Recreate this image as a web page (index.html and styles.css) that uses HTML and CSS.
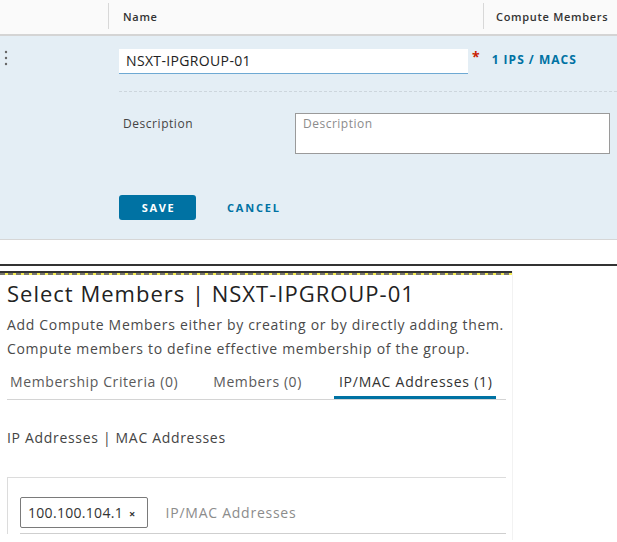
FILE: index.html
```html
<!DOCTYPE html>
<html>
<head>
<meta charset="utf-8">
<link rel="stylesheet" href="styles.css">
</head>
<body>
<div class="grid-head">
  <div class="col col-gutter"></div>
  <div class="col col-name"><span>Name</span></div>
  <div class="col col-members"><span>Compute Members</span></div>
</div>
<div class="edit-row">
  <div class="gutter">
    <svg width="6" height="16" viewBox="0 0 6 16"><circle cx="3" cy="2" r="1.2" fill="#666"/><circle cx="3" cy="8" r="1.2" fill="#666"/><circle cx="3" cy="14" r="1.2" fill="#666"/></svg>
  </div>
  <div class="form">
    <div class="name-line">
      <div class="text-input">NSXT-IPGROUP-01</div>
      <span class="required">*</span>
      <a class="link">1 IPS / MACS</a>
    </div>
    <div class="dashed"></div>
    <div class="desc-line">
      <div class="label">Description</div>
      <div class="textarea">Description</div>
    </div>
    <div class="actions">
      <button class="btn-save">SAVE</button>
      <button class="btn-cancel">CANCEL</button>
    </div>
  </div>
</div>
<div class="spacer"></div>
<div class="rule-full"></div>
<div class="panel">
  <div class="panel-rule"></div>
  <h1 class="title">Select Members | NSXT-IPGROUP-01</h1>
  <p class="desc">Add Compute Members either by creating or by directly adding them.<br>Compute members to define effective membership of the group.</p>
  <div class="tabs">
    <div class="tab">Membership Criteria (0)</div>
    <div class="tab">Members (0)</div>
    <div class="tab active">IP/MAC Addresses (1)</div>
  </div>
  <div class="subhead">IP Addresses | MAC Addresses</div>
  <div class="addr-box">
    <div class="tag-input">
      <span class="chip">100.100.104.1<span class="x">×</span></span>
      <span class="placeholder">IP/MAC Addresses</span>
    </div>
  </div>
</div>
</body>
</html>
```
FILE: styles.css
```css
* { box-sizing: border-box; }
body {
  margin: 0;
  width: 617px;
  height: 542px;
  overflow: hidden;
  background: #fff;
  font-family: "Open Sans", "Noto Sans", sans-serif;
  color: #333;
}
.grid-head {
  display: flex;
  height: 36px;
  padding-top: 3px;
  background: #fafafa;
  border-bottom: 2px solid #d4d4d4;
}
.col { height: 26px; display: flex; align-items: center; }
.col-gutter { width: 108px; }
.col-name { width: 375px; border-left: 1px solid #d8d8d8; padding-left: 14px; }
.col-members { flex: 1; border-left: 1px solid #d8d8d8; padding-left: 12px; }
.col span { font-size: 11px; font-weight: 600; color: #333; letter-spacing: 0.7px; }

.edit-row {
  display: flex;
  height: 204px;
  background: #e4eef5;
  border-bottom: 1px solid #d6d6d6;
}
.gutter { width: 119px; padding: 13px 0 0 3px; }
.form { flex: 1; padding-top: 13px; }
.name-line { display: flex; align-items: flex-start; height: 25px; }
.text-input {
  width: 349px;
  height: 25px;
  background: #fff;
  border-bottom: 1px solid #6ea9d3;
  padding-left: 7px;
  font-size: 14px;
  line-height: 24px;
  color: #222;
  letter-spacing: 0.35px;
}
.required { color: #c92100; font-size: 14px; margin-left: 4px; line-height: 16px; font-weight: 700; }
.link {
  margin-left: 12px;
  font-size: 12px;
  font-weight: 700;
  color: #0072a3;
  line-height: 22px;
  letter-spacing: 1px;
}
.dashed { margin-top: 17px; border-top: 1px dashed #cdd6dd; }
.desc-line { display: flex; margin-top: 21px; }
.label { width: 176px; padding: 3px 0 0 4px; font-size: 12px; color: #444; line-height: 16px; letter-spacing: 0.55px; }
.textarea {
  width: 315px;
  height: 41px;
  background: #fff;
  border: 1px solid #9a9a9a;
  padding: 2px 7px;
  font-size: 12px;
  color: #8c8c8c;
  line-height: 16px;
  letter-spacing: 0.5px;
}
.actions { display: flex; align-items: center; margin-top: 41px; }
.btn-save {
  width: 77px;
  height: 25px;
  border: 0;
  border-radius: 3px;
  background: #0072a3;
  color: #fff;
  font-family: inherit;
  font-size: 11px;
  font-weight: 700;
  letter-spacing: 1.6px;
  padding: 0 0 0 2px;
}
.btn-cancel {
  margin-left: 31px;
  border: 0;
  background: none;
  padding: 0;
  color: #0072a3;
  font-family: inherit;
  font-size: 11px;
  font-weight: 700;
  letter-spacing: 1.8px;
}
.spacer { height: 24px; }
.rule-full { height: 2px; background: #333; }
.panel {
  width: 513px;
  margin-top: 5px;
  border-right: 1px solid #f2f2f2;
  padding: 0 6px 0 7px;
  height: 269px;
}
.panel-rule {
  margin: 0 -6px 0 -7px;
  height: 4px;
  border-top: 2px solid #333;
  background: repeating-linear-gradient(90deg, #77766d 0 5px, #f5ec52 5px 8px);
}
.title {
  margin: 3px 0 0;
  font-size: 22px;
  font-weight: 400;
  line-height: 30px;
  color: #222;
  letter-spacing: 1px;
}
.desc {
  margin: 5px 0 0;
  font-size: 14px;
  line-height: 24px;
  color: #4a4a4a;
  letter-spacing: 0.68px;
}
.tabs {
  display: flex;
  gap: 29px;
  height: 39px;
  border-bottom: 1px solid #d4d4d4;
  letter-spacing: 0.6px;
}
.tab {
  padding: 12px 3px 0;
  font-size: 14px;
  line-height: 18px;
  color: #5a5a5a;
}
.tab.active { color: #333; padding: 12px 3px 0 5px; letter-spacing: 0.75px; box-shadow: inset 0 -3px 0 #0072a3; }
.subhead {
  margin-top: 28px;
  font-size: 14px;
  line-height: 20px;
  color: #444;
  letter-spacing: 0.68px;
}
.addr-box {
  margin-top: 29px;
  border-top: 1px solid #dcdcdc;
  border-left: 1px solid #dcdcdc;
  padding: 19px 0 0 12px;
}
.tag-input {
  display: flex;
  align-items: center;
  border-bottom: 1px solid #cfcfcf;
  padding-bottom: 5px;
}
.chip {
  height: 31px;
  border: 1px solid #7a7a7a;
  border-radius: 2px;
  padding: 0 11px 0 7px;
  font-size: 14px;
  line-height: 29px;
  color: #333;
  letter-spacing: 0.3px;
}
.chip .x { margin-left: 6px; font-size: 11px; font-weight: 700; }
.placeholder { margin-left: 18px; font-size: 14px; color: #8c8c8c; letter-spacing: 0.75px; }
```
